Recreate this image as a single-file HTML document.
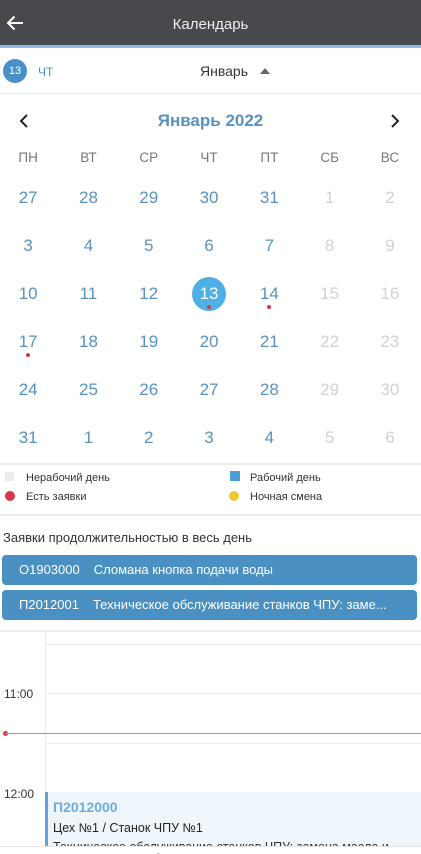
<!DOCTYPE html>
<html><head><meta charset="utf-8"><style>
*{margin:0;padding:0;box-sizing:border-box}
body{width:421px;height:853px;overflow:hidden;background:#fff;font-family:"Liberation Sans","Noto Sans CJK SC",sans-serif;position:relative}
.a{position:absolute}
.hdr{left:0;top:0;width:421px;height:45px;background:#48494d}
.bl{left:0;top:45px;width:421px;height:3px;background:#8db8e0}
.grid{left:-2px;width:421px;display:grid;grid-template-columns:repeat(7,60.3px)}
.grid div{height:48px;line-height:48px;text-align:center;font-size:17px;color:#5a92bf;position:relative}
.grid div.g{color:#d2d2d2}
.wd div{height:20px;line-height:20px;font-size:13.5px;color:#777}
.dot:after{content:"";position:absolute;width:4px;height:4px;border-radius:2px;background:#d23a4a;left:50%;margin-left:-2px;top:35px}
.sel span{display:inline-block;width:34px;height:34px;border-radius:17px;background:#4fb0e6;color:#fff;line-height:34px;margin-top:7px}
.hl{height:1px;background:#ececec;left:0;width:421px}
.lg{font-size:11px;color:#333}
.btn{left:2px;width:415px;height:30px;background:#4a90c2;border-radius:4px;color:#fff;font-size:13px;line-height:30px;white-space:nowrap;overflow:hidden}
.tl{font-size:12px;color:#333}
</style></head><body>
<div class="a hdr"></div>
<div class="a bl"></div>
<svg class="a" style="left:6px;top:15px" width="18" height="16" viewBox="0 0 18 16"><path d="M17 8H2M8.5 1.5L2 8l6.5 6.5" stroke="#fff" stroke-width="2" fill="none"/></svg>
<div class="a" style="left:0;width:421px;top:16px;text-align:center;color:#eee;font-size:15px">Календарь</div>

<div class="a" style="left:3px;top:59px;width:24px;height:24px;border-radius:12px;background:#4a90c8;color:#fff;font-size:11px;line-height:24px;text-align:center">13</div>
<div class="a" style="left:38px;top:65px;color:#4a90c8;font-size:12px">ЧТ</div>
<div class="a" style="left:200px;top:63px;color:#333;font-size:14px">Январь</div>
<div class="a" style="left:260px;top:68px;width:0;height:0;border-left:5px solid transparent;border-right:5px solid transparent;border-bottom:6px solid #666"></div>
<div class="a hl" style="top:93px"></div>

<svg class="a" style="left:18px;top:113px" width="12" height="16" viewBox="0 0 12 16"><path d="M9 2L3 8l6 6" stroke="#222" stroke-width="2" fill="none"/></svg>
<svg class="a" style="left:389px;top:113px" width="12" height="16" viewBox="0 0 12 16"><path d="M3 2l6 6-6 6" stroke="#222" stroke-width="2" fill="none"/></svg>
<div class="a" style="left:0;width:421px;top:111px;text-align:center;color:#5a92bf;font-size:17px;font-weight:bold">Январь 2022</div>

<div class="a grid wd" style="top:148px"><div>ПН</div><div>ВТ</div><div>СР</div><div>ЧТ</div><div>ПТ</div><div>СБ</div><div>ВС</div></div>
<div class="a grid" style="top:174px">
<div>27</div><div>28</div><div>29</div><div>30</div><div>31</div><div class="g">1</div><div class="g">2</div>
<div>3</div><div>4</div><div>5</div><div>6</div><div>7</div><div class="g">8</div><div class="g">9</div>
<div>10</div><div>11</div><div>12</div><div class="sel dot"><span>13</span></div><div class="dot">14</div><div class="g">15</div><div class="g">16</div>
<div class="dot">17</div><div>18</div><div>19</div><div>20</div><div>21</div><div class="g">22</div><div class="g">23</div>
<div>24</div><div>25</div><div>26</div><div>27</div><div>28</div><div class="g">29</div><div class="g">30</div>
<div>31</div><div>1</div><div>2</div><div>3</div><div>4</div><div class="g">5</div><div class="g">6</div>
</div>
<div class="a hl" style="top:463px;height:2px"></div>

<div class="a" style="left:5px;top:472px;width:9px;height:9px;background:#ececec"></div>
<div class="a lg" style="left:26px;top:472px">Нерабочий день</div>
<div class="a" style="left:5px;top:491px;width:10px;height:10px;border-radius:5px;background:#d8344a"></div>
<div class="a lg" style="left:26px;top:491px">Есть заявки</div>
<div class="a" style="left:230px;top:471px;width:10px;height:10px;background:#4a9ed8"></div>
<div class="a lg" style="left:250px;top:472px">Рабочий день</div>
<div class="a" style="left:229px;top:491px;width:10px;height:10px;border-radius:5px;background:#f0c832"></div>
<div class="a lg" style="left:250px;top:491px">Ночная смена</div>
<div class="a hl" style="top:514px;height:2px"></div>

<div class="a" style="left:3px;top:530px;font-size:13px;color:#333">Заявки продолжительностью в весь день</div>
<div class="a btn" style="top:555px"><span style="margin-left:17px">O1903000</span><span style="margin-left:14px">Сломана кнопка подачи воды</span></div>
<div class="a btn" style="top:590px"><span style="margin-left:17px">П2012001</span><span style="margin-left:14px">Техническое обслуживание станков ЧПУ: заме...</span></div>
<div class="a hl" style="top:630px;height:2px"></div>

<div class="a" style="left:45px;top:632px;width:1px;height:221px;background:#ececec"></div>
<div class="a hl" style="left:46px;top:644px;height:1px"></div>
<div class="a hl" style="left:46px;top:693px"></div>
<div class="a hl" style="left:46px;top:743px"></div>
<div class="a tl" style="left:4px;top:687px">11:00</div>
<div class="a" style="left:3px;top:731px;width:5px;height:5px;border-radius:3px;background:#d23a4a"></div>
<div class="a" style="left:5px;top:733px;width:416px;height:1px;background:#e07a85"></div>
<div class="a tl" style="left:4px;top:787px">12:00</div>
<div class="a" style="left:45px;top:792px;width:376px;height:61px;background:#eef5fb;border-left:3px solid #5fa5da"></div>
<div class="a" style="left:53px;top:799px;color:#6aaee0;font-size:14px;font-weight:bold">П2012000</div>
<div class="a" style="left:53px;top:821px;color:#222;font-size:12.5px">Цех №1 / Станок ЧПУ №1</div>
<div class="a" style="left:53px;top:840px;color:#333;font-size:12.5px;white-space:nowrap">Техническое обслуживание станков ЧПУ: замена масла и</div>
<div class="a" style="left:0;top:846px;width:421px;height:7px;background:#fff;border-top:1px solid #e4e4e4"></div>
</body></html>
